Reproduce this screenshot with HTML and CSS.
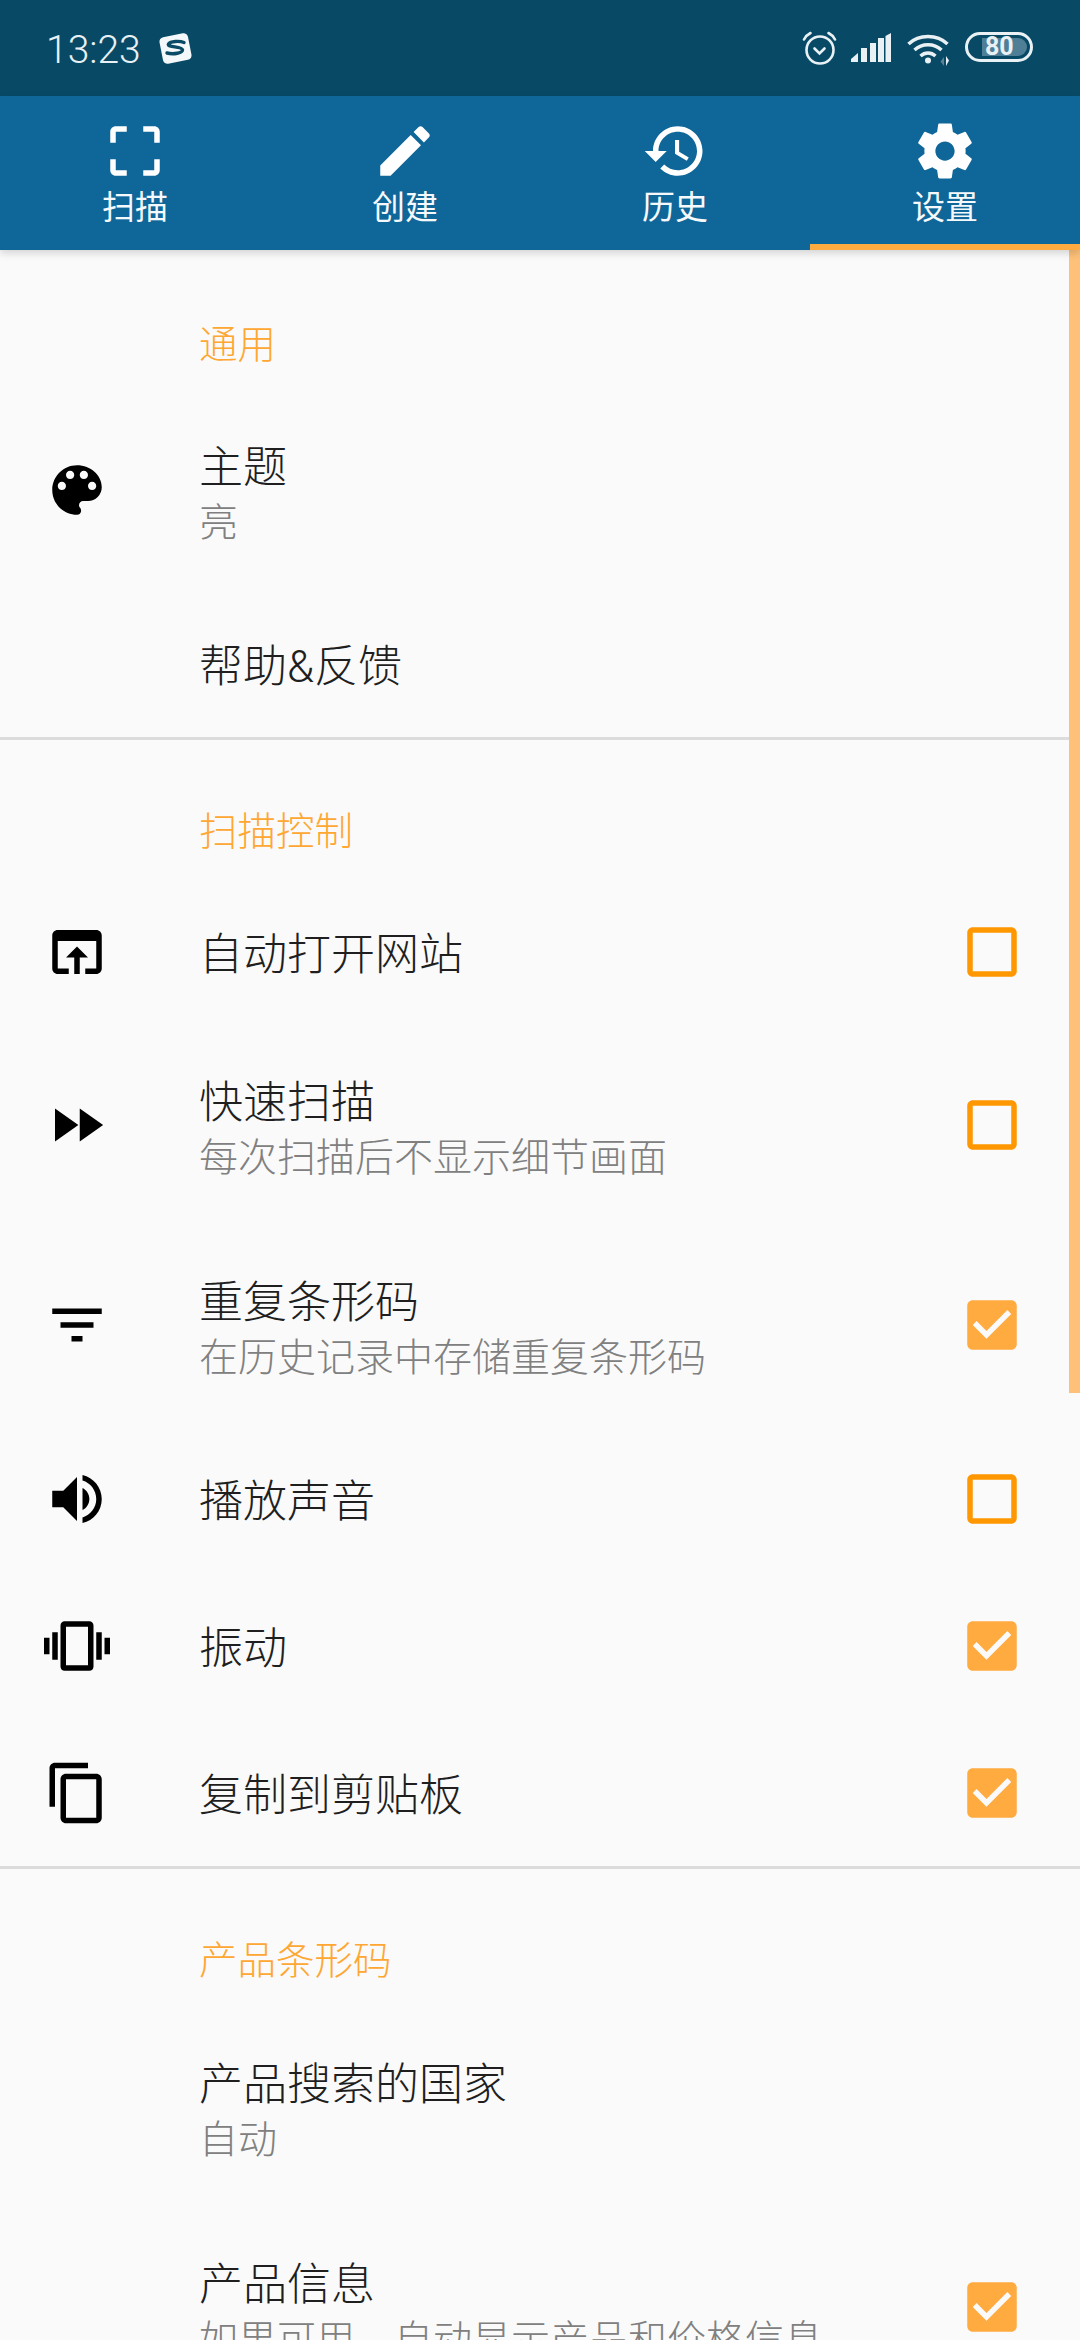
FILE: index.html
```html
<!DOCTYPE html>
<html lang="zh-CN">
<head>
<meta charset="utf-8">
<title>设置</title>
<link rel="stylesheet" href="styles.css">
</head>
<body>
<svg class="defs" width="0" height="0" aria-hidden="true">
  <symbol id="i-scan" viewBox="0 0 24 24"><path d="M3 5v4h2V5h4V3H5c-1.1 0-2 .9-2 2zm2 10H3v4c0 1.1.9 2 2 2h4v-2H5v-4zm14 4h-4v2h4c1.1 0 2-.9 2-2v-4h-2v4zm0-16h-4v2h4v4h2V5c0-1.1-.9-2-2-2z"/></symbol>
  <symbol id="i-edit" viewBox="0 0 24 24"><path d="M3 17.25V21h3.75L17.81 9.94l-3.75-3.75L3 17.25zM20.71 7.04c.39-.39.39-1.02 0-1.41l-2.34-2.34c-.39-.39-1.02-.39-1.41 0l-1.83 1.83 3.75 3.75 1.83-1.83z"/></symbol>
  <symbol id="i-history" viewBox="0 0 24 24"><path d="M13 3c-4.97 0-9 4.03-9 9H1l3.89 3.89.07.14L9 12H6c0-3.87 3.13-7 7-7s7 3.13 7 7-3.13 7-7 7c-1.93 0-3.68-.79-4.94-2.06l-1.42 1.42C8.27 19.99 10.51 21 13 21c4.97 0 9-4.03 9-9s-4.03-9-9-9zm-1 5v5l4.28 2.54.72-1.21-3.5-2.08V8H12z"/></symbol>
  <symbol id="i-gear" viewBox="0 0 24 24"><path d="M19.43 12.98c.04-.32.07-.64.07-.98s-.03-.66-.07-.98l2.11-1.65c.19-.15.24-.42.12-.64l-2-3.46c-.12-.22-.39-.3-.61-.22l-2.49 1c-.52-.4-1.08-.73-1.69-.98l-.38-2.65C14.46 2.18 14.25 2 14 2h-4c-.25 0-.46.18-.49.42l-.38 2.65c-.61.25-1.17.59-1.69.98l-2.49-1c-.23-.09-.49 0-.61.22l-2 3.46c-.13.22-.07.49.12.64l2.11 1.65c-.04.32-.07.65-.07.98s.03.66.07.98l-2.11 1.65c-.19.15-.24.42-.12.64l2 3.46c.12.22.39.3.61.22l2.49-1c.52.4 1.08.73 1.69.98l.38 2.65c.03.24.24.42.49.42h4c.25 0 .46-.18.49-.42l.38-2.65c.61-.25 1.17-.59 1.69-.98l2.49 1c.23.09.49 0 .61-.22l2-3.46c.12-.22.07-.49-.12-.64l-2.11-1.65zM12 15.5c-1.93 0-3.5-1.57-3.5-3.5s1.57-3.5 3.5-3.5 3.5 1.57 3.5 3.5-1.57 3.5-3.5 3.5z"/></symbol>
  <symbol id="i-palette" viewBox="0 0 24 24"><path d="M12 3c-4.97 0-9 4.03-9 9s4.03 9 9 9c.83 0 1.5-.67 1.5-1.5 0-.39-.15-.74-.39-1.01-.23-.26-.38-.61-.38-.99 0-.83.67-1.5 1.5-1.5H16c2.76 0 5-2.24 5-5 0-4.42-4.03-8-9-8zm-5.500 9c-.83 0-1.5-.67-1.5-1.5S5.670 9 6.500 9 8 9.670 8 10.500 7.330 12 6.500 12zm3-4C8.670 8 8 7.330 8 6.500S8.670 5 9.500 5s1.500.67 1.500 1.500S10.330 8 9.500 8zm5 0c-.83 0-1.500-.67-1.500-1.500S13.670 5 14.500 5s1.500.67 1.500 1.500S15.330 8 14.500 8zm3 4c-.83 0-1.500-.67-1.500-1.500S16.670 9 17.500 9s1.500.67 1.500 1.500-.67 1.500-1.500 1.500z"/></symbol>
  <symbol id="i-open" viewBox="0 0 24 24"><path d="M19 4H5c-1.11 0-2 .9-2 2v12c0 1.100.89 2 2 2h4v-2H5V8h14v10h-4v2h4c1.100 0 2-.9 2-2V6c0-1.100-.89-2-2-2zm-7 6l-4 4h3v6h2v-6h3l-4-4z"/></symbol>
  <symbol id="i-ff" viewBox="0 0 24 24"><path d="M4 18l8.500-6L4 6v12zm9-12v12l8.500-6L13 6z"/></symbol>
  <symbol id="i-filter" viewBox="0 0 24 24"><path d="M10 18h4v-2h-4v2zM3 6v2h18V6H3zm3 7h12v-2H6v2z"/></symbol>
  <symbol id="i-volume" viewBox="0 0 24 24"><path d="M3 9v6h4l5 5V4L7 9H3zm13.500 3c0-1.770-1.020-3.290-2.500-4.030v8.050c1.480-.73 2.500-2.250 2.500-4.020zM14 3.230v2.060c2.890.86 5 3.540 5 6.710s-2.110 5.850-5 6.710v2.060c4.010-.91 7-4.490 7-8.770s-2.990-7.860-7-8.770z"/></symbol>
  <symbol id="i-vibrate" viewBox="0 0 24 24"><path d="M0 15h2V9H0v6zm3 2h2V7H3v10zm19-8v6h2V9h-2zm-3 8h2V7h-2v10zM16.500 3h-9C6.670 3 6 3.670 6 4.500v15c0 .83.67 1.500 1.500 1.500h9c.83 0 1.500-.67 1.500-1.500v-15c0-.83-.67-1.500-1.500-1.500zM16 19H8V5h8v14z"/></symbol>
  <symbol id="i-copy" viewBox="0 0 24 24"><path d="M16 1H4c-1.100 0-2 .9-2 2v14h2V3h12V1zm3 4H8c-1.100 0-2 .9-2 2v14c0 1.100.9 2 2 2h11c1.100 0 2-.9 2-2V7c0-1.100-.9-2-2-2zm0 16H8V7h11v14z"/></symbol>
  <symbol id="i-off" viewBox="0 0 24 24"><path d="M19 5v14H5V5h14m0-2H5c-1.100 0-2 .9-2 2v14c0 1.100.9 2 2 2h14c1.100 0 2-.9 2-2V5c0-1.100-.9-2-2-2z"/></symbol>
  <symbol id="i-on" viewBox="0 0 24 24"><path d="M19 3H5c-1.110 0-2 .9-2 2v14c0 1.100.89 2 2 2h14c1.110 0 2-.89 2-2V5c0-1.110-.89-2-2-2zm-9 14l-5-5 1.410-1.410L10 14.170l7.590-7.590L19 8l-9 9z"/></symbol>
</svg>

<div class="screen">
  <header class="status">
    <div class="status-left">
      <span class="time">13:23</span>
      <svg class="logo" viewBox="0 0 33 31">
        <rect x="2" y="2" width="29" height="27" rx="4.500" transform="rotate(-11 16.500 15.500)" fill="#f4f8fa"/>
        <path d="M25 9.500c-4.500-1.800-13.500-1.400-15.500 1.500-2 3.300 13.500 2.400 14 5.700.4 3.300-9 5-15.500 3.300" fill="none" stroke="#0a4a66" stroke-width="3.400" stroke-linecap="round"/>
      </svg>
    </div>
    <div class="status-right">
      <svg class="st-alarm" viewBox="0 0 35 34" fill="none" stroke="#e9f1f5" stroke-width="2.600" stroke-linecap="round">
        <circle cx="18" cy="19" r="13.500"/>
        <path d="M12.500 17.500l5 5 5-5"/>
        <path d="M2 8.500C3.500 5.500 5.500 3.500 8.500 2"/>
        <path d="M33 8.500C31.500 5.500 29.500 3.500 26.500 2"/>
      </svg>
      <svg class="st-signal" viewBox="0 0 40 29" fill="#e9f1f5">
        <path d="M0 29v-3l7-6v9z"/>
        <rect x="10" y="15" width="6" height="14"/>
        <rect x="19" y="10" width="6" height="19"/>
        <rect x="27" y="5" width="6" height="24"/>
        <path d="M34.500 3l5.500-3v29h-5.500z"/>
      </svg>
      <svg class="st-wifi" viewBox="0 0 42 33" fill="none" stroke="#e9f1f5" stroke-width="3.400">
        <path d="M1.500 11C12 1 30 1 40.500 11"/>
        <path d="M7.500 17C15 10 27 10 34.500 17"/>
        <path d="M13.500 23C18 19 24 19 28.500 23"/>
        <circle cx="21" cy="27.500" r="3" fill="#e9f1f5" stroke="none"/>
        <path d="M37 33v-9l-3.500 4.500z" fill="#5b8298" stroke="none"/>
        <path d="M39 33v-10l3 4.500z" fill="#e9f1f5" stroke="none"/>
      </svg>
      <div class="battery"><span class="battery-level">80</span></div>
    </div>
  </header>

  <nav class="tabs">
    <a class="tab"><svg class="tab-icon"><use href="#i-scan"/></svg><span>扫描</span></a>
    <a class="tab"><svg class="tab-icon"><use href="#i-edit"/></svg><span>创建</span></a>
    <a class="tab"><svg class="tab-icon"><use href="#i-history"/></svg><span>历史</span></a>
    <a class="tab tab-active"><svg class="tab-icon"><use href="#i-gear"/></svg><span>设置</span></a>
  </nav>

  <main class="list">
    <div class="scrollbar"></div>

    <section class="group">
      <h2 class="group-title first">通用</h2>
      <div class="row tall">
        <svg class="row-icon"><use href="#i-palette"/></svg>
        <div class="row-text"><div class="title">主题</div><div class="sub">亮</div></div>
      </div>
      <div class="row">
        <div class="row-icon"></div>
        <div class="row-text"><div class="title">帮助&amp;反馈</div></div>
      </div>
    </section>

    <section class="group">
      <h2 class="group-title">扫描控制</h2>
      <div class="row">
        <svg class="row-icon"><use href="#i-open"/></svg>
        <div class="row-text"><div class="title">自动打开网站</div></div>
        <svg class="check off"><use href="#i-off"/></svg>
      </div>
      <div class="row tall">
        <svg class="row-icon"><use href="#i-ff"/></svg>
        <div class="row-text"><div class="title">快速扫描</div><div class="sub">每次扫描后不显示细节画面</div></div>
        <svg class="check off"><use href="#i-off"/></svg>
      </div>
      <div class="row tall">
        <svg class="row-icon"><use href="#i-filter"/></svg>
        <div class="row-text"><div class="title">重复条形码</div><div class="sub">在历史记录中存储重复条形码</div></div>
        <svg class="check on"><use href="#i-on"/></svg>
      </div>
      <div class="row">
        <svg class="row-icon"><use href="#i-volume"/></svg>
        <div class="row-text"><div class="title">播放声音</div></div>
        <svg class="check off"><use href="#i-off"/></svg>
      </div>
      <div class="row">
        <svg class="row-icon"><use href="#i-vibrate"/></svg>
        <div class="row-text"><div class="title">振动</div></div>
        <svg class="check on"><use href="#i-on"/></svg>
      </div>
      <div class="row">
        <svg class="row-icon"><use href="#i-copy"/></svg>
        <div class="row-text"><div class="title">复制到剪贴板</div></div>
        <svg class="check on"><use href="#i-on"/></svg>
      </div>
    </section>

    <section class="group">
      <h2 class="group-title">产品条形码</h2>
      <div class="row tall">
        <div class="row-icon"></div>
        <div class="row-text"><div class="title">产品搜索的国家</div><div class="sub">自动</div></div>
      </div>
      <div class="row tall">
        <div class="row-icon"></div>
        <div class="row-text"><div class="title">产品信息</div><div class="sub">如果可用，自动显示产品和价格信息</div></div>
        <svg class="check on"><use href="#i-on"/></svg>
      </div>
    </section>
  </main>
</div>
</body>
</html>
```

FILE: styles.css
```css
* { box-sizing: border-box; }

html, body {
  margin: 0;
  padding: 0;
  background: #fafafa;
}

.defs { position: absolute; }

.screen {
  width: 1080px;
  height: 2340px;
  overflow: hidden;
  display: flex;
  flex-direction: column;
  font-family: "Roboto", "Noto Sans CJK SC", sans-serif;
  font-weight: 300;
}

/* status bar */
.status {
  height: 96px;
  background: #084a66;
  display: flex;
  justify-content: space-between;
  align-items: center;
  padding: 0 47px 0 46px;
  color: #e9f1f5;
  flex: none;
}
.status-left { display: flex; align-items: center; gap: 18px; }
.time { font-size: 39px; font-weight: 300; line-height: 44px; margin-top: 3px; }
.logo { width: 33px; height: 31px; }
.status-right { display: flex; align-items: center; }
.st-alarm { width: 35px; height: 34px; }
.st-signal { width: 40px; height: 29px; margin-left: 14px; margin-top: -1px; }
.st-wifi { width: 42px; height: 33px; margin-left: 16px; margin-top: 2px; }
.battery {
  width: 68px;
  height: 30px;
  margin-left: 16px;
  margin-top: -2px;
  border: 3px solid #e9f1f5;
  border-radius: 15px;
  padding: 3px 3px 3px 14px;
  display: flex;
}
.battery-level {
  flex: 1;
  background: #4f7f96;
  border-radius: 0 10px 10px 0;
  font-family: "Roboto", sans-serif;
  font-size: 25px;
  font-weight: 700;
  line-height: 18px;
  padding-left: 3px;
  color: #e9f1f5;
}

/* tabs */
.tabs {
  height: 154px;
  flex: none;
  background: #0f6699;
  display: grid;
  grid-template-columns: repeat(4, 1fr);
  box-shadow: 0 3px 8px rgba(0, 0, 0, 0.16);
  position: relative;
  z-index: 2;
}
.tab {
  display: flex;
  flex-direction: column;
  align-items: center;
  padding-top: 22px;
  color: #f6f9fb;
  font-size: 33px;
  font-weight: 400;
  line-height: 48px;
  position: relative;
}
.tab-icon { width: 66px; height: 66px; fill: #fff; }
.tab-active::after {
  content: "";
  position: absolute;
  left: 0;
  right: 0;
  bottom: 0;
  height: 6px;
  background: #ffab40;
}

/* list */
.list {
  flex: 1;
  position: relative;
  background: #fafafa;
}
.scrollbar {
  position: absolute;
  top: 0;
  right: 0;
  width: 11px;
  height: 1143px;
  background: #fdc179;
}
.group + .group { border-top: 3px solid #dcdcdc; }
.group-title {
  margin: 0;
  height: 138px;
  padding: 68px 0 0 199px;
  font-size: 38.5px;
  line-height: 48px;
  font-weight: 300;
  color: #ffa733;
}
.group-title.first { height: 140px; padding-top: 71px; }

.row {
  height: 147px;
  display: flex;
  align-items: center;
  padding-left: 44px;
}
.row.tall { height: 200px; }
.row-icon { width: 66px; height: 66px; flex: none; fill: #000; }
.row-text { flex: 1; margin-left: 89px; min-width: 0; padding-top: 6px; }
.tall .row-text { padding-top: 10px; }
.title { font-size: 44px; line-height: 56px; color: #1f1f1f; }
.sub { font-size: 39px; line-height: 54px; color: #808080; }
.check { width: 66px; height: 66px; flex: none; margin-right: 55px; }
.check.off { fill: #ff9800; }
.check.on { fill: #ffab40; }
```
